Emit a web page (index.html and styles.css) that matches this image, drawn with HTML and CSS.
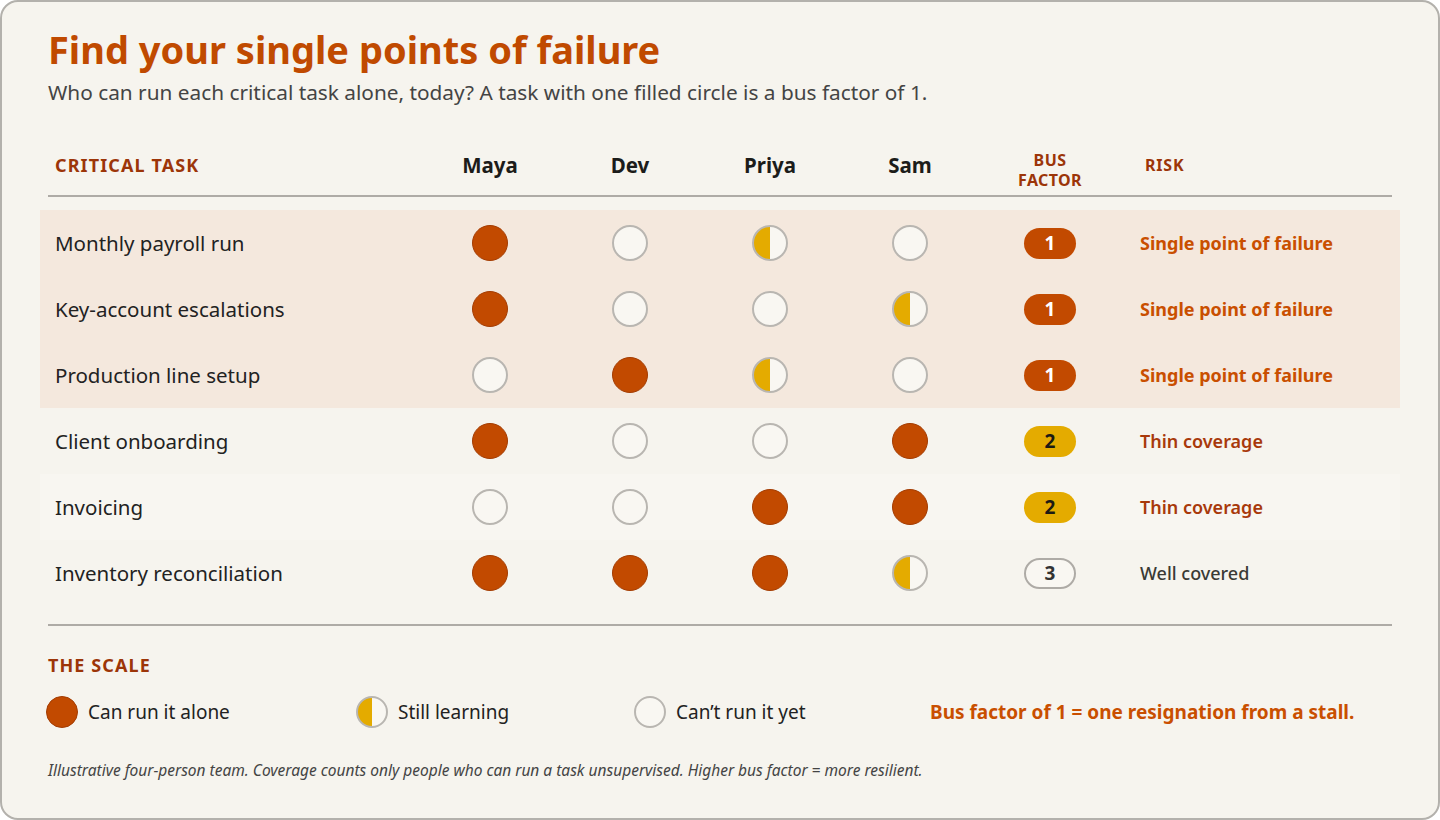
FILE: index.html
```html
<!DOCTYPE html>
<html lang="en">
<head>
<meta charset="utf-8">
<title>Find your single points of failure</title>
<link rel="stylesheet" href="styles.css">
</head>
<body>
<main class="card">
  <header class="intro">
    <h1 class="title">Find your single points of failure</h1>
    <p class="subtitle">Who can run each critical task alone, today? A task with one filled circle is a bus factor of 1.</p>
  </header>

  <section class="matrix">
    <div class="head">
      <div class="h-task">Critical task</div>
      <div class="h-name">Maya</div>
      <div class="h-name">Dev</div>
      <div class="h-name">Priya</div>
      <div class="h-name">Sam</div>
      <div class="h-bus">Bus<br>factor</div>
      <div class="h-risk">Risk</div>
    </div>

    <div class="row hot">
      <div class="task">Monthly payroll run</div>
      <div class="cell"><span class="dot full"></span></div>
      <div class="cell"><span class="dot none"></span></div>
      <div class="cell"><span class="dot half"></span></div>
      <div class="cell"><span class="dot none"></span></div>
      <div class="cell"><span class="pill p1">1</span></div>
      <div class="risk r-spof">Single point of failure</div>
    </div>
    <div class="row hot">
      <div class="task">Key-account escalations</div>
      <div class="cell"><span class="dot full"></span></div>
      <div class="cell"><span class="dot none"></span></div>
      <div class="cell"><span class="dot none"></span></div>
      <div class="cell"><span class="dot half"></span></div>
      <div class="cell"><span class="pill p1">1</span></div>
      <div class="risk r-spof">Single point of failure</div>
    </div>
    <div class="row hot">
      <div class="task">Production line setup</div>
      <div class="cell"><span class="dot none"></span></div>
      <div class="cell"><span class="dot full"></span></div>
      <div class="cell"><span class="dot half"></span></div>
      <div class="cell"><span class="dot none"></span></div>
      <div class="cell"><span class="pill p1">1</span></div>
      <div class="risk r-spof">Single point of failure</div>
    </div>
    <div class="row">
      <div class="task">Client onboarding</div>
      <div class="cell"><span class="dot full"></span></div>
      <div class="cell"><span class="dot none"></span></div>
      <div class="cell"><span class="dot none"></span></div>
      <div class="cell"><span class="dot full"></span></div>
      <div class="cell"><span class="pill p2">2</span></div>
      <div class="risk r-thin">Thin coverage</div>
    </div>
    <div class="row alt">
      <div class="task">Invoicing</div>
      <div class="cell"><span class="dot none"></span></div>
      <div class="cell"><span class="dot none"></span></div>
      <div class="cell"><span class="dot full"></span></div>
      <div class="cell"><span class="dot full"></span></div>
      <div class="cell"><span class="pill p2">2</span></div>
      <div class="risk r-thin">Thin coverage</div>
    </div>
    <div class="row">
      <div class="task">Inventory reconciliation</div>
      <div class="cell"><span class="dot full"></span></div>
      <div class="cell"><span class="dot full"></span></div>
      <div class="cell"><span class="dot full"></span></div>
      <div class="cell"><span class="dot half"></span></div>
      <div class="cell"><span class="pill p3">3</span></div>
      <div class="risk r-well">Well covered</div>
    </div>
  </section>

  <section class="scale">
    <h2 class="scale-title">The scale</h2>
    <div class="legend">
      <div class="key"><span class="dot sm full"></span>Can run it alone</div>
      <div class="key"><span class="dot sm half"></span>Still learning</div>
      <div class="key"><span class="dot sm none"></span>Can’t run it yet</div>
      <div class="key-note">Bus factor of 1 = one resignation from a stall.</div>
    </div>
    <p class="footnote">Illustrative four-person team. Coverage counts only people who can run a task unsupervised. Higher bus factor = more resilient.</p>
  </section>
</main>
</body>
</html>
```

FILE: styles.css
```css
* { box-sizing: border-box; }

html, body {
  margin: 0;
  padding: 0;
  background: #ffffff;
}

body {
  font-family: "Noto Sans", "Open Sans", sans-serif;
  color: #222;
}

.card {
  width: 1440px;
  height: 820px;
  border: 2px solid #b3b1ac;
  border-radius: 18px;
  background: #f6f4ee;
  padding: 22px 38px 0 38px;
  overflow: hidden;
}

.intro {
  padding-left: 8px;
}

.title {
  margin: 0;
  font-size: 38px;
  line-height: 50px;
  font-weight: 700;
  color: #c04a00;
}

.subtitle {
  margin: 4px 0 0;
  font-size: 20.8px;
  line-height: 28px;
  color: #444;
}

/* matrix */
.matrix {
  margin-top: 31px;
}

.head,
.row {
  display: grid;
  grid-template-columns: 380px 140px 140px 140px 140px 140px 1fr;
  align-items: center;
}

.head {
  margin: 0 8px;
  grid-template-columns: 372px 140px 140px 140px 140px 140px 1fr;
  height: 60px;
  border-bottom: 2px solid #aeaba6;
  padding-bottom: 2px;
}

.h-task {
  padding-left: 7px;
  font-size: 18px;
  font-weight: 700;
  text-transform: uppercase;
  color: #9c3508;
  letter-spacing: 1.1px;
}

.h-name {
  text-align: center;
  font-size: 20.5px;
  font-weight: 700;
  color: #1c1c1a;
}

.h-bus {
  padding-top: 10px;
  text-align: center;
  font-size: 16px;
  line-height: 20px;
  font-weight: 700;
  text-transform: uppercase;
  color: #9c3508;
  letter-spacing: 0.4px;
}

.h-risk {
  padding-left: 25px;
  font-size: 16px;
  font-weight: 700;
  text-transform: uppercase;
  color: #9c3508;
  letter-spacing: 0.8px;
}

.head + .row {
  margin-top: 13px;
}

.row {
  height: 66px;
}

.row.hot {
  background: #f4e8dd;
}

.row.alt {
  background: #f8f6f1;
}

.task {
  padding-left: 15px;
  font-size: 20.5px;
  color: #222;
}

.cell {
  display: flex;
  justify-content: center;
  align-items: center;
}

.dot {
  display: inline-block;
  width: 36px;
  height: 36px;
  border-radius: 50%;
  flex: none;
}

.dot.full {
  background: #c24a00;
  border: 1.5px solid #a33c02;
}

.dot.none {
  background: #f9f7f2;
  border: 2px solid #b9b6b1;
}

.dot.half {
  background: linear-gradient(to right, #e4ab00 50%, #f9f7f2 50%);
  border: 2px solid #b9b6b1;
}

.pill {
  display: inline-flex;
  align-items: center;
  justify-content: center;
  width: 52px;
  height: 31px;
  border-radius: 16px;
  font-size: 19px;
  font-weight: 700;
}

.pill.p1 {
  background: #c24a00;
  color: #fff;
}

.pill.p2 {
  background: #e4ab00;
  color: #1c1a14;
}

.pill.p3 {
  background: #f9f7f2;
  border: 2px solid #aeaba6;
  color: #333;
}

.risk {
  padding-left: 20px;
  font-size: 18px;
}

.r-spof {
  font-weight: 700;
  color: #c94f00;
}

.r-thin {
  font-weight: 600;
  color: #a8390b;
}

.r-well {
  font-weight: 500;
  color: #3a3a35;
}

/* scale */
.scale {
  margin: 18px 8px 0;
  border-top: 2px solid #aeaba6;
  padding-top: 27px;
}

.scale-title {
  margin: 0;
  font-size: 18px;
  line-height: 24px;
  font-weight: 700;
  text-transform: uppercase;
  color: #9c3508;
  letter-spacing: 1.1px;
}

.legend {
  margin: 18px 0 0 -2px;
  display: grid;
  grid-template-columns: 310px 278px 296px 1fr;
  align-items: center;
  height: 34px;
}

.key {
  display: flex;
  align-items: center;
  gap: 10px;
  font-size: 19px;
  color: #222;
}

.dot.sm {
  width: 32px;
  height: 32px;
}

.key-note {
  font-size: 19px;
  font-weight: 700;
  color: #c94f00;
}

.footnote {
  margin: 31px 0 0;
  font-size: 15.5px;
  line-height: 20px;
  font-style: italic;
  color: #444;
}
```
